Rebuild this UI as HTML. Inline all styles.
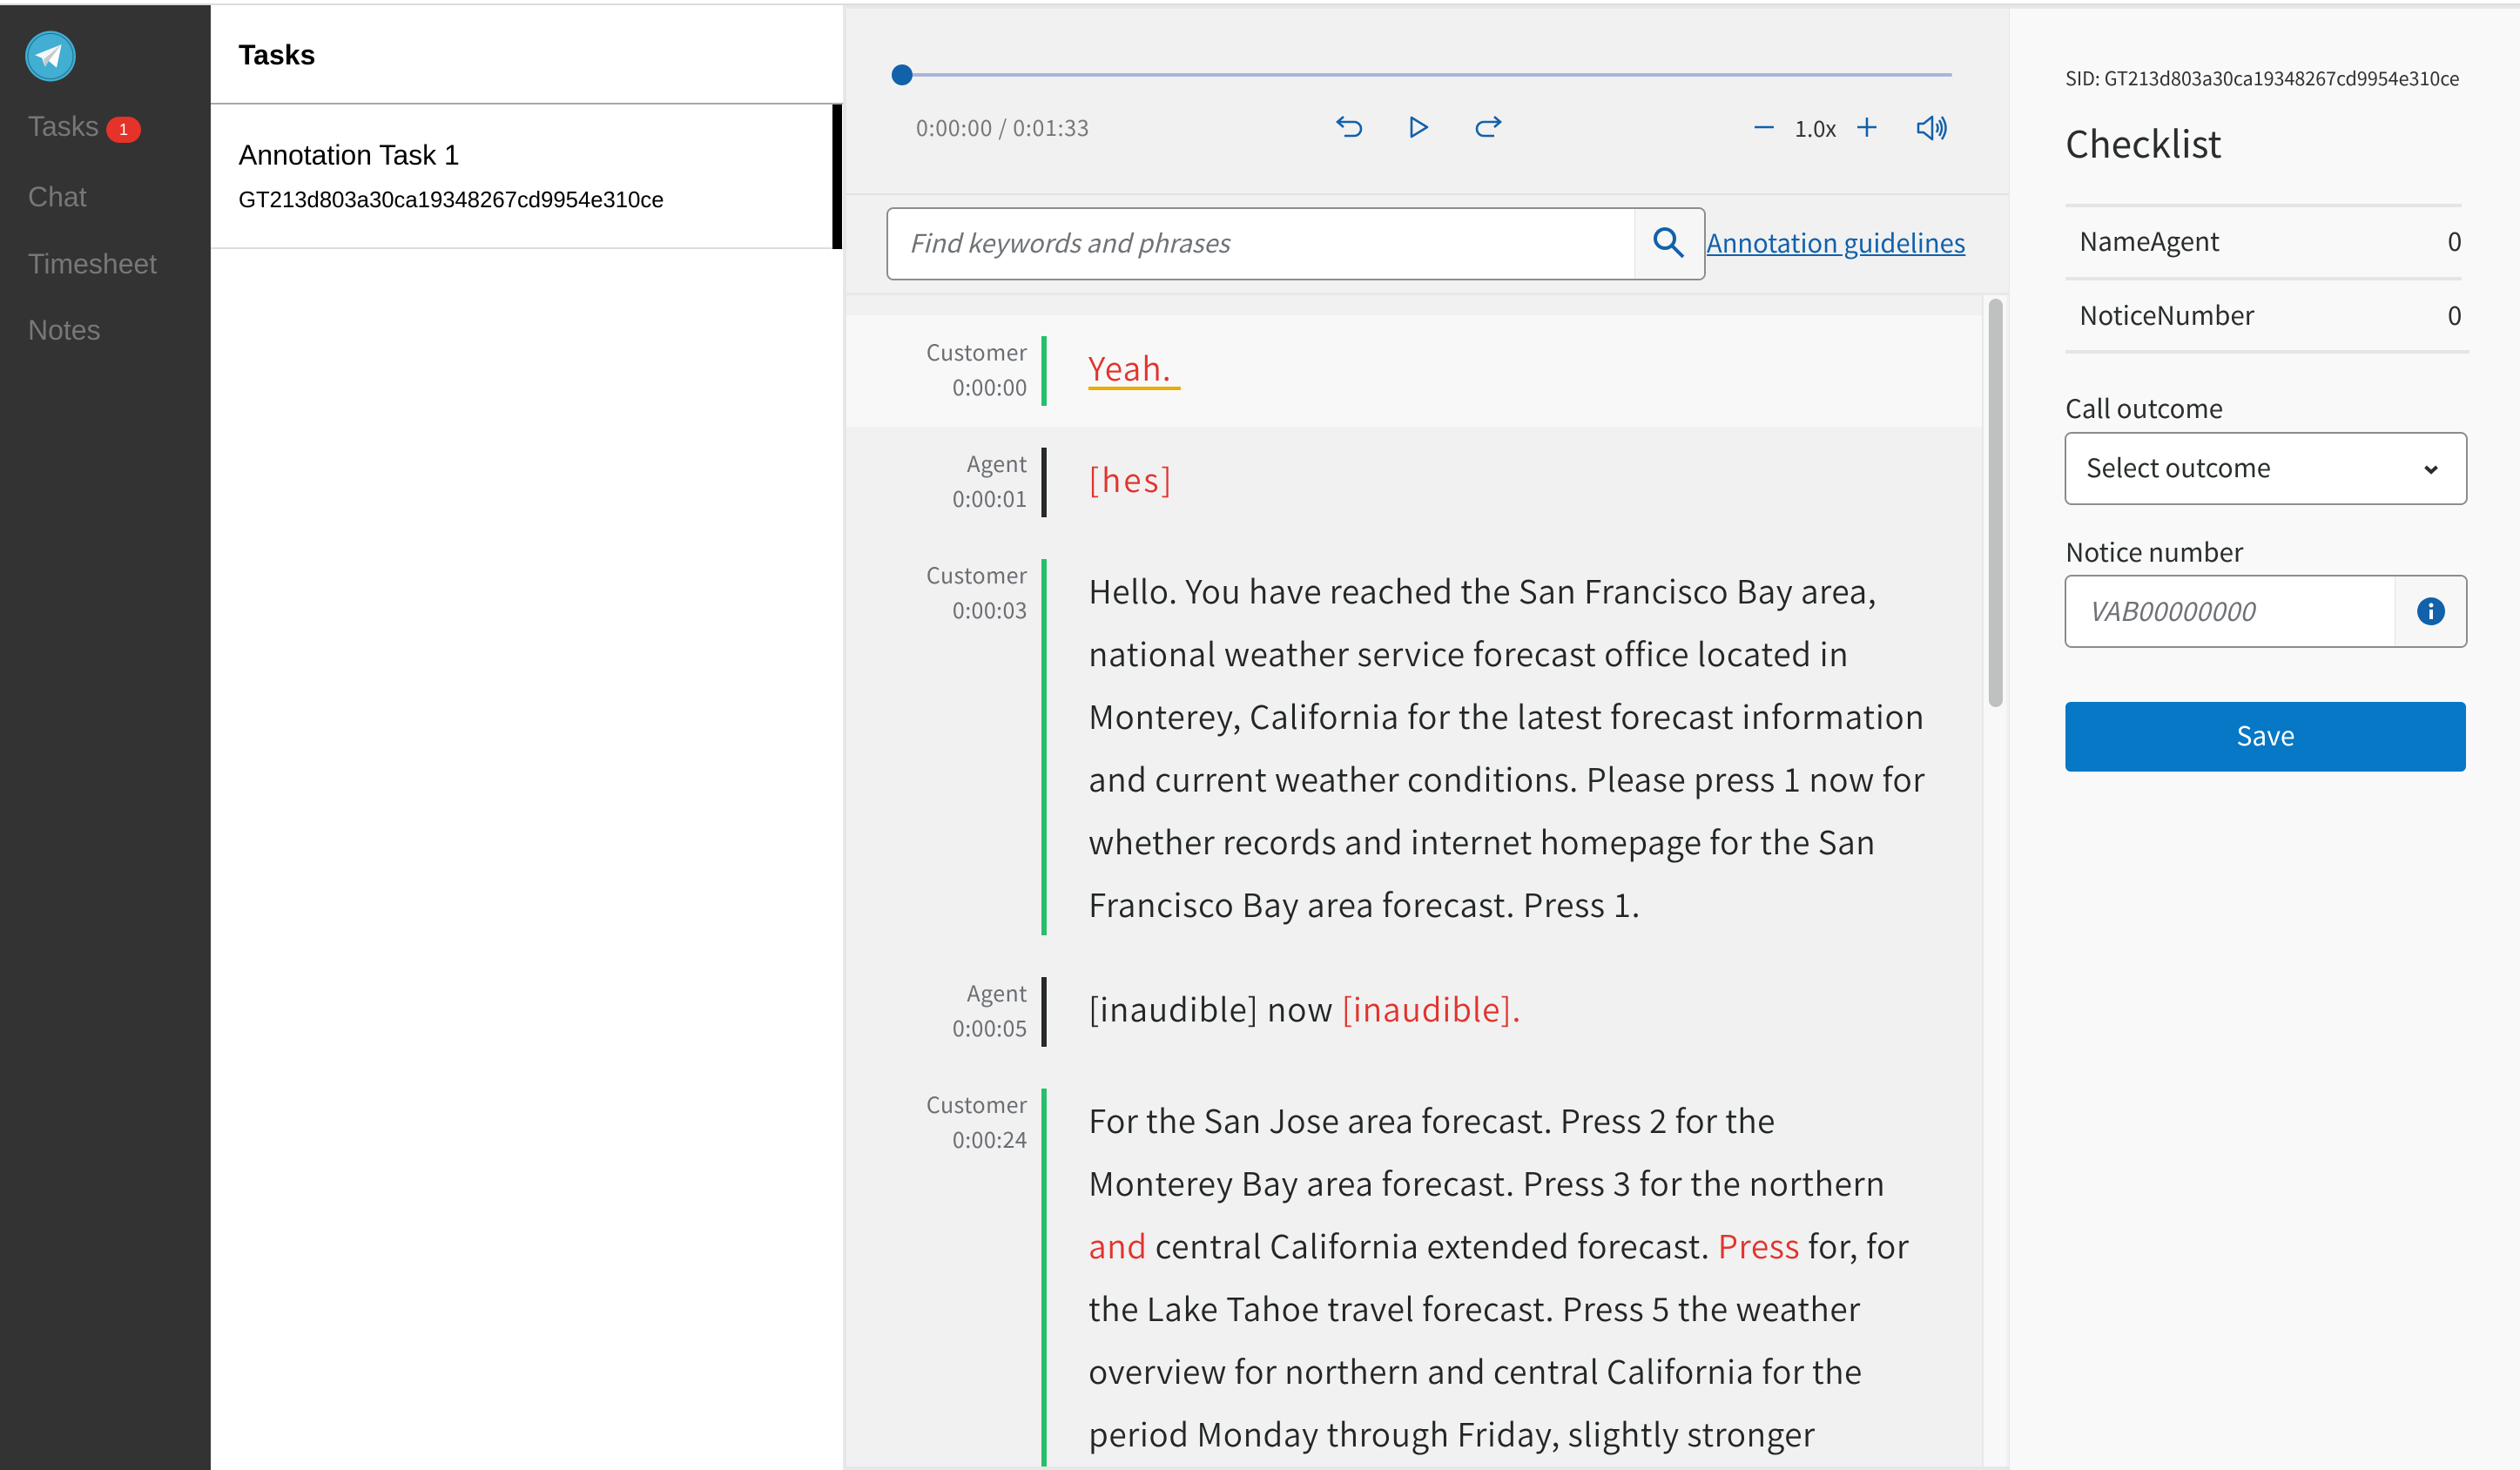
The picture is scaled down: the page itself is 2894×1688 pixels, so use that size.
<!DOCTYPE html>
<html><head><meta charset="utf-8"><style>
html,body{margin:0;padding:0;background:#fff;width:2894px;height:1688px;overflow:hidden}
#r{position:relative;width:2894px;height:1688px;overflow:hidden;background:#fff}
.b{position:absolute}
.t{position:absolute;white-space:nowrap;font-family:"Noto Sans CJK JP","Liberation Sans",sans-serif;color:#2a2d2e}
.h{position:absolute;white-space:nowrap;font-family:"Liberation Sans",Arial,sans-serif;color:#000}
.nav{color:#777;font-size:32px;line-height:40px;left:32px}
.sp{font-size:25px;line-height:40px;color:#6a6e73;text-align:right;width:200px;left:980px;letter-spacing:.4px}
.ln{left:1250px;font-size:37px;font-weight:350;line-height:72px;color:#232627}
.red{color:#e2332d}
svg{position:absolute;left:0;top:0}
</style></head><body><div id="r">
<div class="b" style="left:0;top:4px;width:2894px;height:2px;background:#dcdcdc"></div>
<div class="b" style="left:0;top:6px;width:242px;height:1682px;background:#333"></div>
<div class="b" style="left:242px;top:118px;width:726px;height:2px;background:#a8a8a8"></div>
<div class="b" style="left:242px;top:284px;width:726px;height:2px;background:#ddd"></div>
<div class="b" style="left:956px;top:120px;width:11px;height:166px;background:#000"></div>
<div class="b" style="left:968px;top:6px;width:1926px;height:1682px;background:#e6e7e8"></div>
<div class="b" style="left:972px;top:10px;width:1335px;height:1674px;background:#f1f1f1"></div>
<div class="b" style="left:972px;top:222px;width:1335px;height:2px;background:#e2e2e2"></div>
<div class="b" style="left:972px;top:336px;width:1335px;height:3px;background:#e8e8e8"></div>
<div class="b" style="left:972px;top:362px;width:1304px;height:128px;background:#f8f8f8"></div>
<div class="b" style="left:2276px;top:339px;width:2px;height:1345px;background:#e8e8e8"></div>
<div class="b" style="left:2278px;top:339px;width:26px;height:1345px;background:#f8f8f8"></div>
<div class="b" style="left:2284px;top:343px;width:16px;height:469px;border-radius:8px;background:#bfc1c0"></div>
<div class="b" style="left:2308px;top:10px;width:586px;height:1678px;background:#f9f9f9"></div>

<div class="h" style="left:274px;top:43px;font-size:32px;font-weight:700;line-height:40px">Tasks</div>
<div class="h" style="left:274px;top:158px;font-size:32px;line-height:40px">Annotation Task 1</div>
<div class="h" style="left:274px;top:210px;font-size:25.7px;line-height:40px">GT213d803a30ca19348267cd9954e310ce</div>
<div class="h nav" style="top:125px">Tasks</div>
<div class="b" style="left:122px;top:134px;width:40px;height:30px;border-radius:15px;background:#e5332a"></div>
<div class="h" style="left:122px;top:134px;width:40px;text-align:center;color:#fff;font-size:18px;line-height:30px">1</div>
<div class="h nav" style="top:206px">Chat</div>
<div class="h nav" style="top:283px">Timesheet</div>
<div class="h nav" style="top:359px">Notes</div>

<div class="b" style="left:1036px;top:84px;width:1206px;height:4px;background:#a9b5da;border-radius:2px"></div>
<div class="b" style="left:1024px;top:74px;width:24px;height:24px;border-radius:50%;background:#1161ab"></div>
<div class="t" style="left:1052px;top:126px;font-size:25px;line-height:40px;color:#777;letter-spacing:.7px">0:00:00 / 0:01:33</div>
<div class="t" style="left:2061px;top:127px;font-size:25.5px;line-height:40px;color:#333">1.0x</div>

<div class="b" style="left:1018px;top:238px;width:937px;height:80px;border:2px solid #8a8d90;border-radius:8px;background:#fff"></div>
<div class="b" style="left:1877px;top:240px;width:80px;height:80px;background:#f6f6f6;border-left:1px solid #e4e4e4;border-radius:0 6px 6px 0;box-sizing:border-box"></div>
<div class="t" style="left:1044px;top:256px;font-size:29px;line-height:44px;font-style:italic;letter-spacing:.05px;color:#6f7276">Find keywords and phrases</div>
<div class="t" style="left:1960px;top:256px;font-size:29.1px;line-height:44px;color:#1161ab;text-decoration:underline">Annotation guidelines</div>

<div class="b" style="left:1196px;top:386px;width:6px;height:80px;background:#26bf6b"></div>
<div class="b" style="left:1196px;top:514px;width:6px;height:80px;background:#272a2b"></div>
<div class="b" style="left:1196px;top:642px;width:6px;height:432px;background:#26bf6b"></div>
<div class="b" style="left:1196px;top:1122px;width:6px;height:80px;background:#272a2b"></div>
<div class="b" style="left:1196px;top:1250px;width:6px;height:434px;background:#26bf6b"></div>
<div class="b" style="left:1250px;top:444px;width:106px;height:4px;background:#e8ae00"></div>

<div class="t sp" style="top:384px">Customer</div><div class="t sp" style="top:424px">0:00:00</div>
<div class="t sp" style="top:512px">Agent</div><div class="t sp" style="top:552px">0:00:01</div>
<div class="t sp" style="top:640px">Customer</div><div class="t sp" style="top:680px">0:00:03</div>
<div class="t sp" style="top:1120px">Agent</div><div class="t sp" style="top:1160px">0:00:05</div>
<div class="t sp" style="top:1248px">Customer</div><div class="t sp" style="top:1288px">0:00:24</div>

<div class="t ln red" style="top:385px;letter-spacing:1.1px">Yeah.</div>
<div class="t ln red" style="top:513px;letter-spacing:2.86px">[hes]</div>
<div class="t ln" style="top:641px;letter-spacing:.52px">Hello. You have reached the San Francisco Bay area,</div>
<div class="t ln" style="top:713px;letter-spacing:.65px">national weather service forecast office located in</div>
<div class="t ln" style="top:785px;letter-spacing:.71px">Monterey, California for the latest forecast information</div>
<div class="t ln" style="top:857px;letter-spacing:.56px">and current weather conditions. Please press 1 now for</div>
<div class="t ln" style="top:929px;letter-spacing:.5px">whether records and internet homepage for the San</div>
<div class="t ln" style="top:1001px;letter-spacing:.67px">Francisco Bay area forecast. Press 1.</div>
<div class="t ln" style="top:1121px;letter-spacing:.91px">[inaudible] now <span class="red">[inaudible].</span></div>
<div class="t ln" style="top:1249px;letter-spacing:.45px">For the San Jose area forecast. Press 2 for the</div>
<div class="t ln" style="top:1321px;letter-spacing:.7px">Monterey Bay area forecast. Press 3 for the northern</div>
<div class="t ln" style="top:1393px;letter-spacing:.64px"><span class="red">and</span> central California extended forecast. <span class="red">Press</span> for, for</div>
<div class="t ln" style="top:1465px;letter-spacing:.57px">the Lake Tahoe travel forecast. Press 5 the weather</div>
<div class="t ln" style="top:1537px;letter-spacing:.46px">overview for northern and central California for the</div>
<div class="t ln" style="top:1609px;letter-spacing:.58px">period Monday through Friday, slightly stronger</div>

<div class="t" style="left:2372px;top:70px;font-size:21.5px;line-height:40px;color:#2f3234">SID: GT213d803a30ca19348267cd9954e310ce</div>
<div class="t" style="left:2372px;top:134px;font-size:42.3px;line-height:60px">Checklist</div>
<div class="b" style="left:2372px;top:234px;width:455px;height:4px;background:#e4e5e7"></div>
<div class="b" style="left:2372px;top:318px;width:455px;height:4px;background:#e4e5e7"></div>
<div class="b" style="left:2372px;top:402px;width:464px;height:4px;background:#e4e5e7"></div>
<div class="t" style="left:2388px;top:256px;font-size:29.5px;line-height:40px">NameAgent</div>
<div class="t" style="left:2811px;top:256px;font-size:29.5px;line-height:40px">0</div>
<div class="t" style="left:2388px;top:341px;font-size:29.5px;line-height:40px">NoticeNumber</div>
<div class="t" style="left:2811px;top:341px;font-size:29.5px;line-height:40px">0</div>
<div class="t" style="left:2372px;top:448px;font-size:29.5px;line-height:40px">Call outcome</div>
<div class="b" style="left:2371px;top:496px;width:459px;height:80px;border:2px solid #8a8d90;border-radius:8px;background:#fff"></div>
<div class="t" style="left:2396px;top:516px;font-size:29.3px;line-height:40px">Select outcome</div>
<div class="t" style="left:2372px;top:613px;font-size:29.5px;line-height:40px">Notice number</div>
<div class="b" style="left:2371px;top:660px;width:459px;height:80px;border:2px solid #8a8d90;border-radius:8px;background:#fff"></div>
<div class="b" style="left:2750px;top:662px;width:82px;height:80px;background:#f7f7f7;border-left:1px solid #e4e4e4;border-radius:0 6px 6px 0;box-sizing:border-box"></div>
<div class="t" style="left:2399px;top:680px;font-size:30px;line-height:40px;font-style:italic;letter-spacing:.2px;color:#6f7276">VAB00000000</div>
<div class="b" style="left:2372px;top:806px;width:460px;height:80px;background:#0678c5;border-radius:6px"></div>
<div class="t" style="left:2372px;top:823px;width:460px;text-align:center;font-size:30px;line-height:40px;color:#fff">Save</div>

<svg width="2894" height="1688" viewBox="0 0 2894 1688" fill="none">
<circle cx="58" cy="64.5" r="29" fill="#41aed2"/>
<circle cx="58" cy="64.5" r="26" stroke="#1f6e92" stroke-width="1"/>
<path d="M70.7 51L40 63.3L48.3 66.7Z" fill="#f4f6f7"/>
<path d="M70.7 51L48.3 66.7L51.7 76.7L56 70L65 77.7Z" fill="#fff"/>
<path d="M70.7 51L50 68L51.7 76.7L56 70Z" fill="#c3cbce"/>
<g stroke="#1161ab" stroke-width="2.6">
<path d="M1543 134L1536 140L1543 146M1536 140H1555A8 8 0 0 1 1555 156H1544"/>
<path d="M1621 135L1639 146L1621 157Z" stroke-linejoin="round"/>
<path d="M1716 134L1723 140L1716 146M1723 140H1704A8 8 0 0 0 1704 156H1716"/>
<path d="M2015 146H2037M2133 146H2155M2144 135V157"/>
<path d="M2203 142V152H2209L2219 160V134L2209 142Z" stroke-width="2.5" stroke-linejoin="round"/>
<path d="M2224 142Q2227 147 2224 152M2227 138Q2233 147 2227 156M2230 134Q2239 147 2230 160" stroke-width="2.5"/>
</g>
<circle cx="1912" cy="274" r="11" stroke="#1161ab" stroke-width="4"/>
<path d="M1920 282L1933 295" stroke="#1161ab" stroke-width="4"/>
<path d="M2785.5 536L2792 542L2798.5 536" stroke="#2a2d2e" stroke-width="4"/>
<circle cx="2792" cy="702" r="16" fill="#1161ab"/>
<rect x="2790" y="700" width="4" height="11" fill="#fff"/><circle cx="2792" cy="695" r="2.5" fill="#fff"/>
</svg>
</div></body></html>
